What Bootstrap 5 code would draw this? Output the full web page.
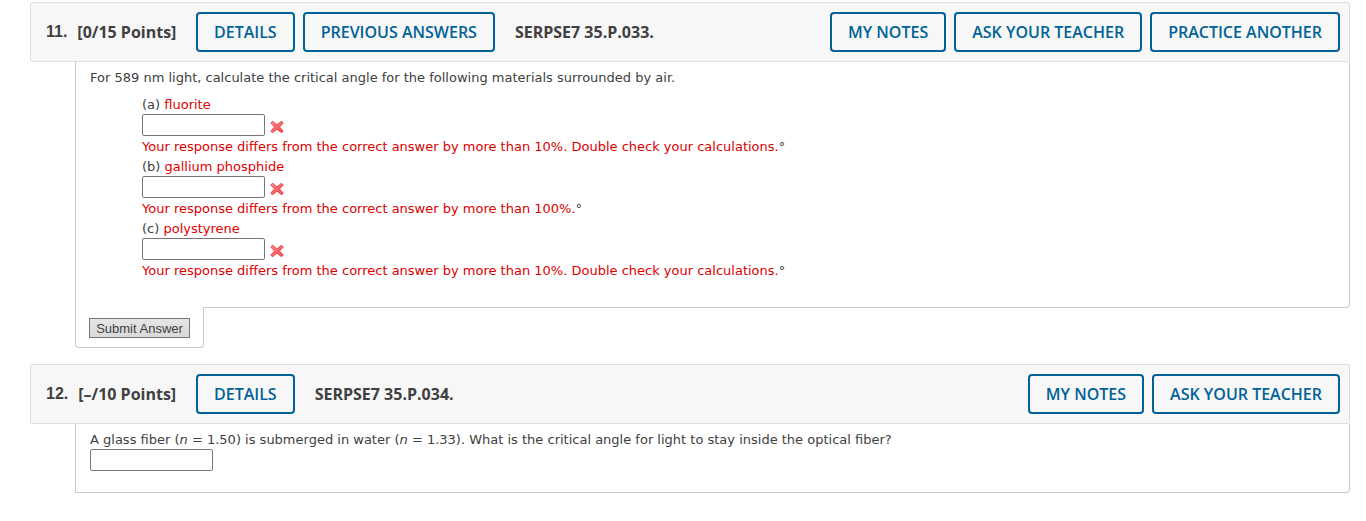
<!DOCTYPE html>
<html lang="en">
<head>
<meta charset="utf-8">
<meta name="viewport" content="width=device-width, initial-scale=1">
<title>SERPSE7 Chapter 35</title>
<link href="https://cdn.jsdelivr.net/npm/bootstrap@5.3.0/dist/css/bootstrap.min.css" rel="stylesheet">
<style>
body { font: 13px/20px Verdana, "DejaVu Sans", sans-serif; color: #404040; background: #fff; padding: 2px 16px 28px 30px; }
.q-head { font: 700 16px/24px "Open Sans", sans-serif; background: #f7f7f7; border: 1px solid #ddd; border-radius: 2px; padding: 9px 9px 9px 15px; }
.q-num { font: 700 16px/24px "Liberation Sans", sans-serif; }
.q-head h2 { font: inherit; }
.q-label { min-width: 142px; gap: 10px; }
.btn-q { --bs-btn-color: #006298; --bs-btn-border-color: #006298; --bs-btn-hover-color: #fff; --bs-btn-hover-bg: #006298; --bs-btn-hover-border-color: #006298;
  --bs-btn-padding-x: 16px; --bs-btn-padding-y: 6px; --bs-btn-border-width: 2px; --bs-btn-border-radius: 4px;
  --bs-btn-font-size: 16px; --bs-btn-line-height: 24px; --bs-btn-font-weight: 600; white-space: nowrap; }
.q-body { margin-left: 45px; padding: 5px 14px 21px; border: 1px solid #c8c8c8; border-top: 0; border-radius: 0 0 4px 0; }
.q-body.has-submit { padding-bottom: 27px; }
.q-parts { margin: 7px 0 0 52px; }
.q-line { display: block; padding-top: 2px; line-height: 18px; }
.answer { display: block; width: 123px; height: 22px; border: 1px solid #767676; border-radius: 2px; padding: 1px 2px; background: #fff; }
.wrong { color: #d00; }
.term { color: #e00000; }
.q-submit { position: relative; width: 129px; margin: -1px 0 0 45px; padding: 11px 13px 9px; background: #fff; border: 1px solid #c8c8c8; border-top: 0; border-radius: 0 0 4px 4px; }
.btn-submit { display: block; width: 101px; height: 20px; padding: 1px 0 0; font: 13px/17px "Liberation Sans", sans-serif; color: #404040; background: linear-gradient(#e6e6e6, #d9d9d9); border: 1px solid #767676; white-space: nowrap; }
</style>
</head>
<body>
<main>
  <section class="mb-3">
    <header class="q-head d-flex flex-wrap align-items-center gap-2">
      <div class="q-label d-flex"><span class="q-num">11.</span><span class="text-nowrap">[0/15 Points]</span></div>
      <button type="button" class="btn btn-q">DETAILS</button>
      <button type="button" class="btn btn-q">PREVIOUS ANSWERS</button>
      <h2 class="m-0 ps-2 ms-1">SERPSE7 35.P.033.</h2>
      <div class="d-flex flex-wrap gap-2 ms-auto">
        <button type="button" class="btn btn-q">MY NOTES</button>
        <button type="button" class="btn btn-q">ASK YOUR TEACHER</button>
        <button type="button" class="btn btn-q">PRACTICE ANOTHER</button>
      </div>
    </header>
    <form>
      <div class="q-body has-submit">
        <div class="q-line">For 589 nm light, calculate the critical angle for the following materials surrounded by air.</div>
        <div class="q-parts">
          <label class="q-line" for="a">(a) <span class="term">fluorite</span></label>
          <div class="d-flex"><input class="answer" id="a" type="text"><svg class="ms-1 mt-1" width="16" height="18" viewBox="0 0 16 18" role="img" aria-label="Incorrect"><use href="#cross"/></svg></div>
          <div class="q-line"><span class="wrong">Your response differs from the correct answer by more than 10%. Double check your calculations.</span>°</div>
          <label class="q-line" for="b">(b) <span class="term">gallium phosphide</span></label>
          <div class="d-flex"><input class="answer" id="b" type="text"><svg class="ms-1 mt-1" width="16" height="18" viewBox="0 0 16 18" role="img" aria-label="Incorrect"><use href="#cross"/></svg></div>
          <div class="q-line"><span class="wrong">Your response differs from the correct answer by more than 100%.</span>°</div>
          <label class="q-line" for="c">(c) <span class="term">polystyrene</span></label>
          <div class="d-flex"><input class="answer" id="c" type="text"><svg class="ms-1 mt-1" width="16" height="18" viewBox="0 0 16 18" role="img" aria-label="Incorrect"><use href="#cross"/></svg></div>
          <div class="q-line"><span class="wrong">Your response differs from the correct answer by more than 10%. Double check your calculations.</span>°</div>
        </div>
      </div>
      <div class="q-submit"><button type="submit" class="btn-submit">Submit Answer</button></div>
    </form>
  </section>
  <section>
    <header class="q-head d-flex flex-wrap align-items-center gap-2">
      <div class="q-label d-flex"><span class="q-num">12.</span><span class="text-nowrap">[–/10 Points]</span></div>
      <button type="button" class="btn btn-q">DETAILS</button>
      <h2 class="m-0 ps-2 ms-1">SERPSE7 35.P.034.</h2>
      <div class="d-flex flex-wrap gap-2 ms-auto">
        <button type="button" class="btn btn-q">MY NOTES</button>
        <button type="button" class="btn btn-q">ASK YOUR TEACHER</button>
      </div>
    </header>
    <form class="q-body">
      <label class="q-line" for="fiber">A glass fiber (<i>n</i> = 1.50) is submerged in water (<i>n</i> = 1.33). What is the critical angle for light to stay inside the optical fiber?</label>
      <input class="answer" id="fiber" type="text">
    </form>
  </section>
</main>
<svg class="position-absolute" width="0" height="0" aria-hidden="true">
  <defs>
    <linearGradient id="red" x1="0" y1="0" x2="1" y2="1"><stop offset="0" stop-color="#ff9292"/><stop offset="1" stop-color="#ee3338"/></linearGradient>
    <symbol id="cross" viewBox="0 0 16 18">
      <path d="M3.6 3.2 L8 6.9 L12.4 3.2 L14.2 5 L10.5 9 L14.2 13 L12.6 14.8 L8 11.2 L3.4 14.8 L1.8 13 L5.5 9 L1.8 5 Z" fill="url(#red)" stroke="#f0484c" stroke-width="1" stroke-linejoin="round"/>
      <path d="M4 5 L8 8.8 L12 5 M4 13 L8 9.2 L12 13" fill="none" stroke="#ff7476" stroke-width="1"/>
    </symbol>
  </defs>
</svg>
<script src="https://cdn.jsdelivr.net/npm/bootstrap@5.3.0/dist/js/bootstrap.bundle.min.js"></script>
</body>
</html>
